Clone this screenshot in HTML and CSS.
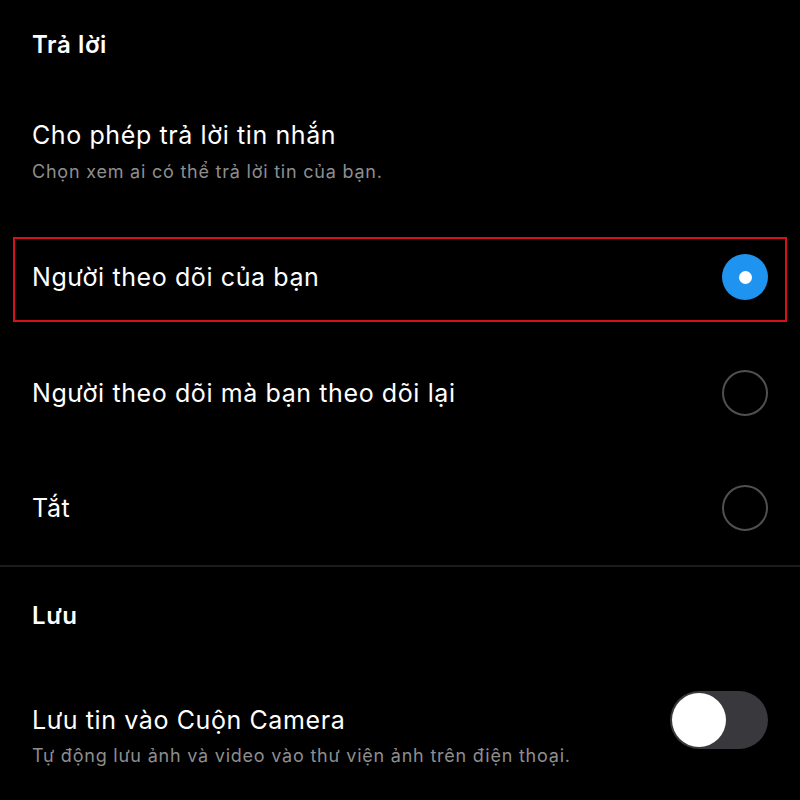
FILE: index.html
```html
<!DOCTYPE html>
<html lang="vi">
<head>
    <meta charset="UTF-8">
    <meta name="viewport" content="width=device-width, initial-scale=1.0">
    <title>Cài đặt tin</title>
    <link rel="stylesheet" href="styles.css">
</head>
<body>
    <div class="settings">
        <!-- Reply settings -->
        <div class="section-title">Trả lời</div>

        <div class="item">
            <div class="item-title">Cho phép trả lời tin nhắn</div>
            <div class="item-desc">Chọn xem ai có thể trả lời tin của bạn.</div>
        </div>

        <div class="option marked">
            <span class="option-label">Người theo dõi của bạn</span>
            <span class="radio checked"></span>
        </div>
        <div class="option">
            <span class="option-label">Người theo dõi mà bạn theo dõi lại</span>
            <span class="radio"></span>
        </div>
        <div class="option">
            <span class="option-label">Tắt</span>
            <span class="radio"></span>
        </div>

        <div class="divider"></div>

        <!-- Save settings -->
        <div class="section-title save">Lưu</div>

        <div class="item toggle-item">
            <div class="toggle-row">
                <div class="item-title">Lưu tin vào Cuộn Camera</div>
                <span class="switch"><span class="knob"></span></span>
            </div>
            <div class="item-desc">Tự động lưu ảnh và video vào thư viện ảnh trên điện thoại.</div>
        </div>
    </div>
</body>
</html>
```

FILE: styles.css
```css
body, html {
    margin: 0;
    padding: 0;
    background: #000;
    color: #fff;
    font-family: Inter, "Noto Sans", sans-serif;
}

.settings {
    width: 800px;
    height: 800px;
    overflow: hidden;
}

.section-title {
    height: 88px;
    padding: 0 32px;
    display: flex;
    align-items: center;
    font-size: 24px;
    font-weight: 600;
    letter-spacing: 0.6px;
}

.section-title.save {
    height: 96px;
}

.item {
    padding: 32px 32px 0;
    height: 131px;
    box-sizing: border-box;
}

.item-title,
.option {
    font-size: 25px;
    letter-spacing: 0.6px;
}

.item-title {
    line-height: 30px;
}

.item-desc {
    margin-top: 12px;
    font-size: 18px;
    line-height: 20px;
    letter-spacing: 0.78px;
    color: #8e8e8e;
}

.option {
    position: relative;
    height: 116px;
    padding: 0 32px;
    display: flex;
    align-items: center;
    justify-content: space-between;
}

.option + .option {
    height: 115px;
}

.option.marked::after {
    content: "";
    position: absolute;
    left: 13px;
    right: 13px;
    top: 18px;
    height: 81px;
    border: 2px solid #d7101c;
}

.radio {
    width: 46px;
    height: 46px;
    border: 2px solid #505050;
    border-radius: 50%;
    box-sizing: border-box;
}

.radio.checked {
    border: none;
    background: #1e93f0;
    display: flex;
    align-items: center;
    justify-content: center;
}

.radio.checked::before {
    content: "";
    width: 13px;
    height: 13px;
    border-radius: 50%;
    background: #fff;
}

.divider {
    height: 2px;
    background: #1c1c1e;
}

.toggle-item {
    padding-top: 0;
}

.toggle-row {
    display: flex;
    align-items: center;
    justify-content: space-between;
    margin-top: 28px;
}

.toggle-item .item-desc {
    margin-top: -3px;
}

.switch {
    width: 98px;
    height: 58px;
    background: #39393d;
    border-radius: 29px;
    display: flex;
    align-items: center;
    padding: 0 2px;
    box-sizing: border-box;
}

.knob {
    width: 54px;
    height: 54px;
    border-radius: 50%;
    background: #fff;
}
```
